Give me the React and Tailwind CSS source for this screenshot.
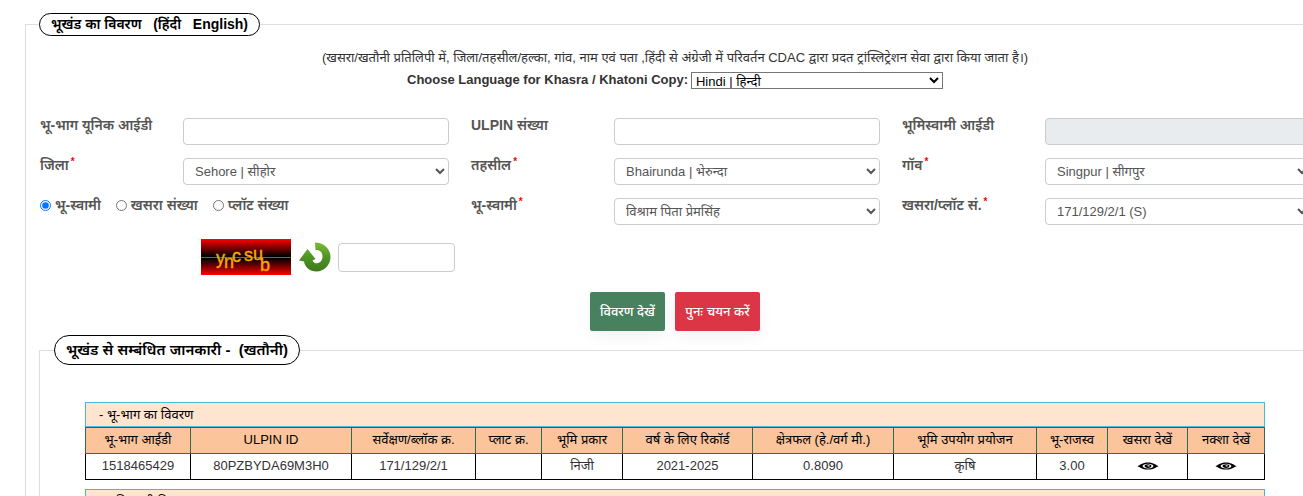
const cols = [
  ['भू-भाग आईडी', '1518465429', 'w-[105px]'],
  ['ULPIN ID', '80PZBYDA69M3H0', 'w-[161px]'],
  ['सर्वेक्षण/ब्लॉक क्र.', '171/129/2/1', 'w-[124px]'],
  ['प्लाट क्र.', '', 'w-[66px]'],
  ['भूमि प्रकार', 'निजी', 'w-[81px]'],
  ['वर्ष के लिए रिकॉर्ड', '2021-2025', 'w-[130px]'],
  ['क्षेत्रफल (हे./वर्ग मी.)', '0.8090', 'w-[141px]'],
  ['भूमि उपयोग प्रयोजन', 'कृषि', 'w-[143px]'],
  ['भू-राजस्व', '3.00', 'w-[71px]'],
  ['खसरा देखें', 'eye', 'w-[80px]'],
  ['नक्शा देखें', 'eye', 'w-[77px]'],
];

const control =
  'h-[27px] w-full rounded-[4px] border border-[#ccc] bg-white text-[13px] text-[#555]';

function Eye() {
  return (
    <svg viewBox="0 0 22 8" className="h-[8px] w-[22px]" aria-hidden="true">
      <path d="M0.5 4.2 C3 3.4 5 0.6 11 0.6 C17 0.6 19 3.4 21.5 4.2 C19 5 17 7.6 11 7.6 C5 7.6 3 5 0.5 4.2Z" fill="#000" />
      <ellipse cx="11" cy="4.1" rx="5.4" ry="2.4" fill="#fff" />
      <ellipse cx="11" cy="4.1" rx="3.4" ry="1.8" fill="#000" />
      <ellipse cx="11.6" cy="3.8" rx="1.4" ry="0.6" fill="#fff" />
    </svg>
  );
}

function Field({ id, label, star, children }) {
  return (
    <div className="grid h-[40px] grid-cols-[143px_266px]">
      <label htmlFor={id} className="text-[14px] leading-[14px] font-semibold text-[#555]">
        {label}
        {star && <sup className="-top-[5px] ml-[2px] text-[10px] leading-none text-[#f00]">*</sup>}
      </label>
      {children}
    </div>
  );
}

function SelectField({ id, label, value }) {
  return (
    <Field id={id} label={label} star>
      <select id={id} className={control + ' px-[7px]'}>
        <option>{value}</option>
      </select>
    </Field>
  );
}

function Radio({ label, ...rest }) {
  return (
    <label className="flex items-center gap-[4px]">
      <input type="radio" name="searchBy" className="h-[11px] w-[11px]" {...rest} />
      {label}
    </label>
  );
}

function Captcha() {
  return (
    <svg viewBox="0 0 90 36" className="h-[36px] w-[90px]" role="img" aria-label="Captcha">
      <defs>
        <linearGradient id="cap" x1="0" y1="0" x2="0" y2="1">
          <stop offset="0" stopColor="#f00" />
          <stop offset="0.48" stopColor="#000" />
          <stop offset="0.54" stopColor="#000" />
          <stop offset="1" stopColor="#f00" />
        </linearGradient>
      </defs>
      <rect width="90" height="36" fill="url(#cap)" />
      <path d="M0 18.5H90" stroke="#c04040" strokeWidth="1" />
      <g fill="#ffa500" stroke="#ffa500" strokeWidth="0.4" fontFamily="Liberation Sans, sans-serif" fontSize="18">
        <text x="15" y="25">y</text>
        <text x="23" y="29">n</text>
        <text x="31" y="23">c</text>
        <text x="43" y="22">s</text>
        <text x="52" y="21">u</text>
        <text x="59" y="32">b</text>
      </g>
    </svg>
  );
}

function Refresh() {
  return (
    <svg viewBox="0 0 32 30" className="h-[30px] w-[32px]" aria-hidden="true">
      <defs>
        <linearGradient id="leaf" x1="0" y1="0" x2="0" y2="1">
          <stop offset="0" stopColor="#7cbb3a" />
          <stop offset="0.5" stopColor="#4f9423" />
          <stop offset="1" stopColor="#3c7a1a" />
        </linearGradient>
      </defs>
      <path
        d="M16 0.5 C25 0.5 31.5 7 31.5 15 C31.5 23 25 29.5 17.5 29.5 C11 29.5 6 25.5 5 19.5 L0 18.5 L8.5 7 L16.5 17 L13.5 18.5 C14.5 20.5 16 21.5 18 21.3 C21.5 21 23.5 18 23.5 14.5 C23.5 10.500 21 7.500 16.5 8 Z"
        fill="url(#leaf)"
      />
    </svg>
  );
}

export default function App() {
  return (
    <div className="overflow-hidden bg-white pt-[13px] font-['Liberation_Sans','Noto_Sans_Devanagari','Noto_Sans',sans-serif] text-[#333]">
      <main className="-mr-[22px] ml-[25px]">
        <fieldset className="min-w-0 border border-[#ddd] px-[13px]">
          <legend className="h-[23px] rounded-full border border-black px-[11px] text-[14px] leading-[20px] font-semibold whitespace-pre text-black">
            भूखंड का विवरण{'   '}(हिंदी{'   '}English)
          </legend>
          <div className="pt-[11px] text-center text-[13px]">
            <p className="leading-[22px]">
              (खसरा/खतौनी प्रतिलिपी में, जिला/तहसील/हल्का, गांव, नाम एवं पता ,हिंदी से अंग्रेजी में परिवर्तन CDAC द्वारा प्रदत ट्रांस्लिट्रेशन सेवा द्वारा किया जाता है।)
            </p>
            <div className="flex h-[22px] items-center justify-center gap-[3px]">
              <label htmlFor="lang" className="font-bold">
                Choose Language for Khasra / Khatoni Copy:
              </label>
              <select id="lang" className="h-[17px] w-[252px] border border-[#767676] bg-white leading-[15px] text-black">
                <option>Hindi | हिन्दी</option>
              </select>
            </div>
          </div>

          <form className="pt-[27px]">
            <div className="-mr-[22px] grid grid-cols-3 pl-[1px]">
              <Field id="uid" label="भू-भाग यूनिक आईडी">
                <input id="uid" className={control + ' px-[11px]'} />
              </Field>
              <Field id="ulpin" label="ULPIN संख्या">
                <input id="ulpin" className={control + ' px-[11px]'} />
              </Field>
              <Field id="owner-id" label="भूमिस्वामी आईडी">
                <input id="owner-id" disabled className="h-[27px] w-full rounded-[4px] border border-[#ccc] bg-[#e9ecef] px-[11px] text-[13px]" />
              </Field>
              <SelectField id="district" label="जिला" value="Sehore | सीहोर" />
              <SelectField id="tehsil" label="तहसील" value="Bhairunda | भेरुन्दा" />
              <SelectField id="village" label="गॉव" value="Singpur | सीगपुर" />
              <div className="flex h-[14px] items-center gap-[15px] text-[14px] leading-[14px] font-semibold text-[#555]">
                <Radio label="भू-स्वामी" defaultChecked />
                <Radio label="खसरा संख्या" />
                <Radio label="प्लॉट संख्या" />
              </div>
              <SelectField id="owner" label="भू-स्वामी" value="विश्राम पिता प्रेमसिंह" />
              <SelectField id="khasra" label="खसरा/प्लॉट सं." value="171/129/2/1 (S)" />
            </div>
            <div className="flex h-[38px] items-center pl-[162px]">
              <Captcha />
              <button type="button" aria-label="Refresh captcha" className="ml-[8px]">
                <Refresh />
              </button>
              <input aria-label="Captcha text" className="ml-[7px] h-[29px] w-[117px] rounded-[4px] border border-[#ccc] px-[8px] text-[13px]" />
            </div>
            <div className="flex justify-center gap-[10px] pt-[16px] text-[13px] text-white">
              <button type="button" className="h-[39px] w-[75px] rounded-[2px] bg-[#47815e] font-medium shadow-[0_6px_16px_rgba(0,0,0,0.05)]">
                विवरण देखें
              </button>
              <button type="reset" className="h-[39px] w-[85px] rounded-[2px] bg-[#dc3545] font-medium shadow-[0_6px_16px_rgba(0,0,0,0.05)]">
                पुनः चयन करें
              </button>
            </div>
          </form>

          <fieldset className="mt-[4px] min-w-0 border border-[#ddd] px-[14px]">
            <legend className="h-[30px] rounded-full border border-black px-[11px] text-[15px] leading-[27px] font-semibold whitespace-pre text-black">
              भूखंड से सम्बंधित जानकारी -{'  '}(खतौनी)
            </legend>
            <div className="px-[31px] pt-[37px] text-[13px]">
              <h3 className="h-[25px] border border-[#46b8da] bg-[#ffe4cf] px-[13px] leading-[23px] text-black">
                - भू-भाग का विवरण
              </h3>
              <table className="w-full table-fixed border-collapse text-center">
                <thead>
                  <tr className="h-[26px] bg-[#fcc49b] text-black">
                    {cols.map(([name, , w]) => (
                      <th key={name} className={w + ' border border-[#2f6b4f] p-0 pb-[2px] leading-[20px] font-normal whitespace-nowrap'}>
                        {name}
                      </th>
                    ))}
                  </tr>
                </thead>
                <tbody>
                  <tr className="h-[26px]">
                    {cols.map(([name, value]) => (
                      <td key={name} className="border border-black p-0 pb-[2px] leading-[20px]">
                        {value === 'eye' ? (
                          <button type="button" aria-label={name} className="align-middle">
                            <Eye />
                          </button>
                        ) : (
                          value
                        )}
                      </td>
                    ))}
                  </tr>
                </tbody>
              </table>
              <h3 className="mt-[9px] h-[25px] border border-[#46b8da] bg-[#ffe4cf] px-[13px] leading-[23px] text-black">
                - भूमिस्वामी विवरण
              </h3>
            </div>
          </fieldset>
        </fieldset>
      </main>
    </div>
  );
}
